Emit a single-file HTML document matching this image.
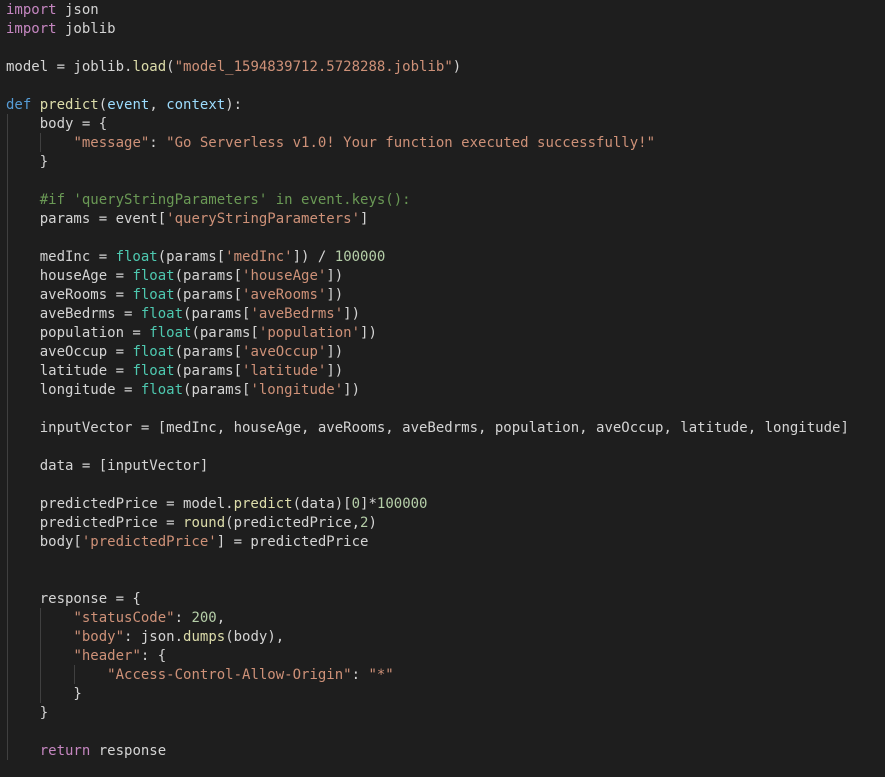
<!DOCTYPE html>
<html><head><meta charset="utf-8"><style>
html,body{margin:0;padding:0;background:#1e1e1e;width:885px;height:777px;overflow:hidden}
pre{margin:0;padding:0 0 0 6px;font-family:"DejaVu Sans Mono","Liberation Mono",monospace;font-size:14px;line-height:19px;color:#d4d4d4;position:relative;top:1px}
.k{color:#c586c0}.d{color:#569cd6}.f{color:#dcdcaa}.s{color:#ce9178}.n{color:#b5cea8}.c{color:#6a9955}.t{color:#4ec9b0}.p{color:#9cdcfe}
.g{position:absolute;width:1px;background:#404040}
</style></head><body>
<div class="g" style="left:7px;top:114px;height:646px"></div>
<div class="g" style="left:40px;top:133px;height:19px"></div>
<div class="g" style="left:40px;top:608px;height:95px"></div>
<div class="g" style="left:74px;top:665px;height:19px"></div>
<pre><span class="k">import</span> json
<span class="k">import</span> joblib

model = joblib.<span class="f">load</span>(<span class="s">"model_1594839712.5728288.joblib"</span>)

<span class="d">def</span> <span class="f">predict</span>(<span class="p">event</span>, <span class="p">context</span>):
    body = {
        <span class="s">"message"</span>: <span class="s">"Go Serverless v1.0! Your function executed successfully!"</span>
    }

    <span class="c">#if 'queryStringParameters' in event.keys():</span>
    params = event[<span class="s">'queryStringParameters'</span>]

    medInc = <span class="t">float</span>(params[<span class="s">'medInc'</span>]) / <span class="n">100000</span>
    houseAge = <span class="t">float</span>(params[<span class="s">'houseAge'</span>])
    aveRooms = <span class="t">float</span>(params[<span class="s">'aveRooms'</span>])
    aveBedrms = <span class="t">float</span>(params[<span class="s">'aveBedrms'</span>])
    population = <span class="t">float</span>(params[<span class="s">'population'</span>])
    aveOccup = <span class="t">float</span>(params[<span class="s">'aveOccup'</span>])
    latitude = <span class="t">float</span>(params[<span class="s">'latitude'</span>])
    longitude = <span class="t">float</span>(params[<span class="s">'longitude'</span>])

    inputVector = [medInc, houseAge, aveRooms, aveBedrms, population, aveOccup, latitude, longitude]

    data = [inputVector]

    predictedPrice = model.<span class="f">predict</span>(data)[<span class="n">0</span>]*<span class="n">100000</span>
    predictedPrice = <span class="f">round</span>(predictedPrice,<span class="n">2</span>)
    body[<span class="s">'predictedPrice'</span>] = predictedPrice


    response = {
        <span class="s">"statusCode"</span>: <span class="n">200</span>,
        <span class="s">"body"</span>: json.<span class="f">dumps</span>(body),
        <span class="s">"header"</span>: {
            <span class="s">"Access-Control-Allow-Origin"</span>: <span class="s">"*"</span>
        }
    }

    <span class="k">return</span> response
</pre>
</body></html>
